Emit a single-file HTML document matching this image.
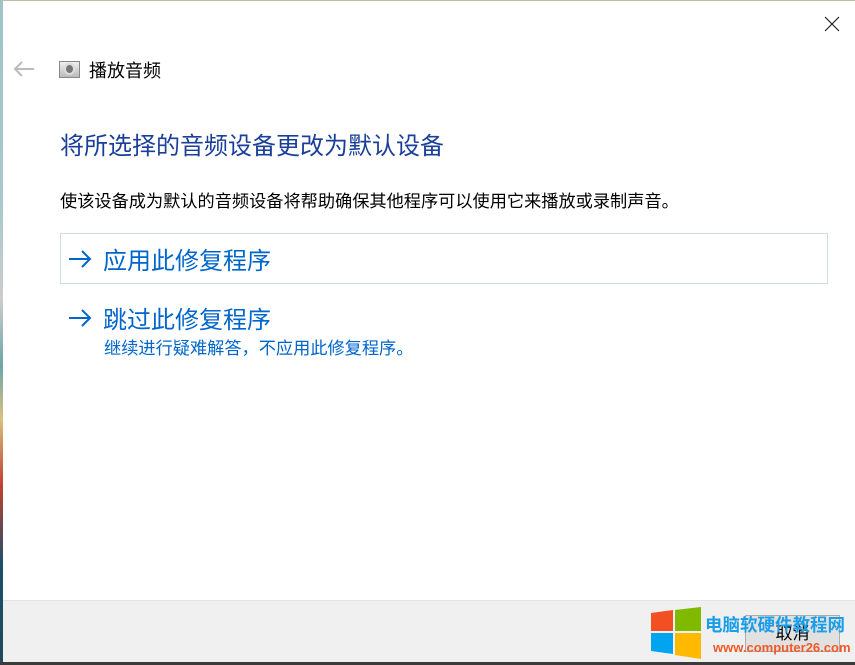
<!DOCTYPE html>
<html><head><meta charset="utf-8"><style>
*{margin:0;padding:0;box-sizing:border-box}
body{width:855px;height:665px;overflow:hidden;background:#fff;position:relative;font-family:"Liberation Sans","Noto Sans CJK SC",sans-serif}
.abs{position:absolute;white-space:nowrap}
.edge{left:0;top:0;width:3px;height:665px;background:linear-gradient(#9fc3c8 0,#a7c9cc 30%,#ccc 45%,#6fa4a8 55%,#d9c080 63%,#c04030 73%,#1d4f6a 85%,#1f4a5a 100%)}
.top{left:0;top:0;width:855px;height:1px;background:#b9c3a0}
.foot{left:3px;top:600px;width:852px;height:62px;background:#f0f0f0;border-top:1px solid #e3e3e3}
.bot{left:0;top:662px;width:855px;height:3px;background:#3b3b3b}
.blue{color:#0066cc}
</style></head><body>
<div class="abs top"></div>
<div class="abs edge"></div>
<svg class="abs" style="left:822px;top:14px" width="20" height="20"><path d="M3 3L17 17M17 3L3 17" stroke="#222" stroke-width="1.2"/></svg>
<svg class="abs" style="left:13px;top:60px" width="24" height="18"><path d="M2 9H21M9 2L2 9L9 16" stroke="#bbb" stroke-width="2" fill="none"/></svg>
<div class="abs" style="left:59px;top:61px;width:21px;height:17px;background:linear-gradient(#eee,#bbb);border:1px solid #888"><div style="margin:1px 4px;width:11px;height:12px;border-radius:50%;background:#777;border:2px solid #ddd"></div></div>
<div class="abs" style="left:89px;top:57px;font-size:18px;color:#000">播放音频</div>
<div class="abs" style="left:60px;top:126px;font-size:24px;color:#1a3f99">将所选择的音频设备更改为默认设备</div>
<div class="abs" style="left:60px;top:187px;font-size:17.2px;color:#000">使该设备成为默认的音频设备将帮助确保其他程序可以使用它来播放或录制声音。</div>
<div class="abs" style="left:60px;top:233px;width:768px;height:51px;border:1px solid #c9dcea"></div>
<svg class="abs" style="left:68px;top:249px" width="24" height="20"><path d="M1 10H22M14 2L22 10L14 18" stroke="#0066cc" stroke-width="2" fill="none"/></svg>
<div class="abs blue" style="left:103px;top:241px;font-size:24px">应用此修复程序</div>
<svg class="abs" style="left:68px;top:308px" width="24" height="20"><path d="M1 10H22M14 2L22 10L14 18" stroke="#0066cc" stroke-width="2" fill="none"/></svg>
<div class="abs blue" style="left:103px;top:300px;font-size:24px">跳过此修复程序</div>
<div class="abs blue" style="left:104px;top:334px;font-size:17.2px">继续进行疑难解答，不应用此修复程序。</div>
<div class="abs foot"></div>
<div class="abs" style="left:745px;top:615px;width:95px;height:37px;background:#e1e1e1;border:1px solid #adadad;font-size:17px;text-align:center;line-height:35px">取消</div>
<svg class="abs" style="left:651px;top:607px" width="50" height="52"><path d="M0 6L22 3V24H0Z" fill="#f25022"/><path d="M24 3L50 0V24H24Z" fill="#7fba00"/><path d="M0 26H22V47L0 44Z" fill="#00a4ef"/><path d="M24 26H50V52L24 48Z" fill="#ffb900"/></svg>
<div class="abs" style="left:705px;top:612px;font-size:17.5px;font-weight:bold;color:#1a9ee8">电脑软硬件教程网</div>
<div class="abs" style="left:713px;top:640px;font-size:13px;font-weight:bold;color:#f05a28">www.computer26.com</div>
<div class="abs bot"></div>
</body></html>
